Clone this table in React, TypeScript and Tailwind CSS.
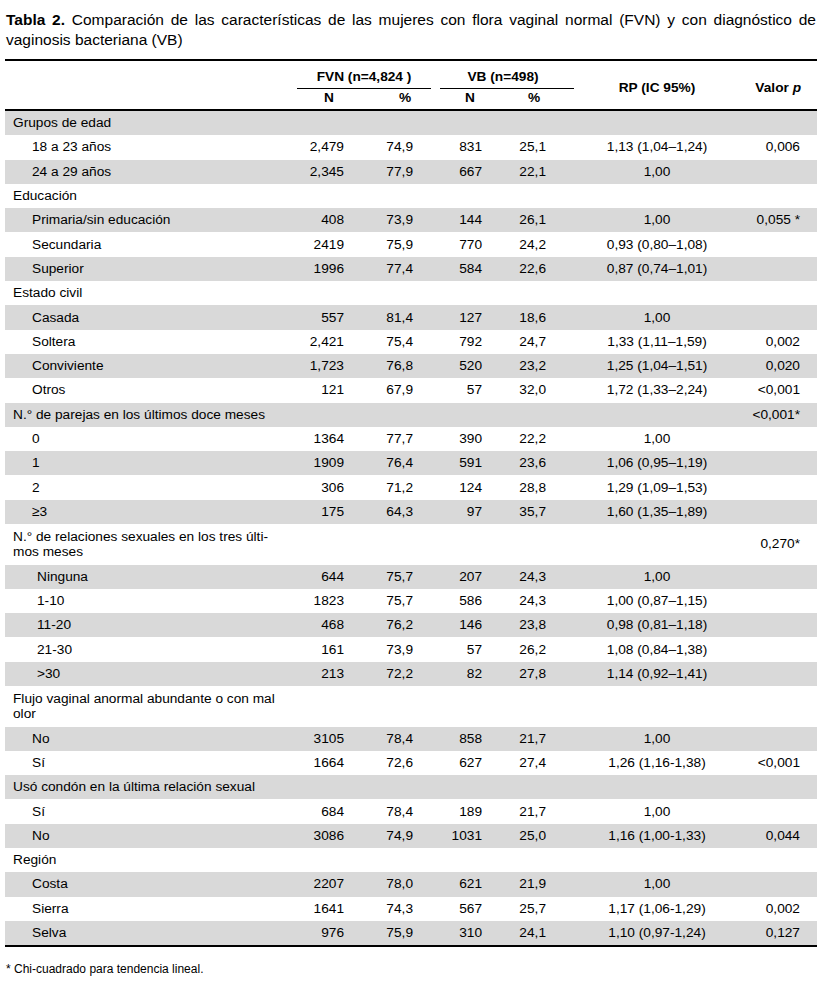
import React from "react";

type Row = {
  l: React.ReactNode;
  t: "cat" | "sub" | "sub2";
  g: boolean;
  v?: string[];
  p?: string;
  dbl?: boolean;
};

const rows: Row[] = [
  { l: "Grupos de edad", t: "cat", g: true },
  { l: "18 a 23 años", t: "sub", g: false, v: ["2,479", "74,9", "831", "25,1", "1,13 (1,04–1,24)", "0,006"] },
  { l: "24 a 29 años", t: "sub", g: true, v: ["2,345", "77,9", "667", "22,1", "1,00", ""] },
  { l: "Educación", t: "cat", g: false },
  { l: "Primaria/sin educación", t: "sub", g: true, v: ["408", "73,9", "144", "26,1", "1,00", "0,055 *"] },
  { l: "Secundaria", t: "sub", g: false, v: ["2419", "75,9", "770", "24,2", "0,93 (0,80–1,08)", ""] },
  { l: "Superior", t: "sub", g: true, v: ["1996", "77,4", "584", "22,6", "0,87 (0,74–1,01)", ""] },
  { l: "Estado civil", t: "cat", g: false },
  { l: "Casada", t: "sub", g: true, v: ["557", "81,4", "127", "18,6", "1,00", ""] },
  { l: "Soltera", t: "sub", g: false, v: ["2,421", "75,4", "792", "24,7", "1,33 (1,11–1,59)", "0,002"] },
  { l: "Conviviente", t: "sub", g: true, v: ["1,723", "76,8", "520", "23,2", "1,25 (1,04–1,51)", "0,020"] },
  { l: "Otros", t: "sub", g: false, v: ["121", "67,9", "57", "32,0", "1,72 (1,33–2,24)", "<0,001"] },
  { l: "N.° de parejas en los últimos doce meses", t: "cat", g: true, p: "<0,001*" },
  { l: "0", t: "sub", g: false, v: ["1364", "77,7", "390", "22,2", "1,00", ""] },
  { l: "1", t: "sub", g: true, v: ["1909", "76,4", "591", "23,6", "1,06 (0,95–1,19)", ""] },
  { l: "2", t: "sub", g: false, v: ["306", "71,2", "124", "28,8", "1,29 (1,09–1,53)", ""] },
  { l: "≥3", t: "sub", g: true, v: ["175", "64,3", "97", "35,7", "1,60 (1,35–1,89)", ""] },
  {
    l: (
      <>
        N.° de relaciones sexuales en los tres últi-
        <br />
        mos meses
      </>
    ),
    t: "cat",
    g: false,
    p: "0,270*",
    dbl: true,
  },
  { l: "Ninguna", t: "sub2", g: true, v: ["644", "75,7", "207", "24,3", "1,00", ""] },
  { l: "1-10", t: "sub2", g: false, v: ["1823", "75,7", "586", "24,3", "1,00 (0,87–1,15)", ""] },
  { l: "11-20", t: "sub2", g: true, v: ["468", "76,2", "146", "23,8", "0,98 (0,81–1,18)", ""] },
  { l: "21-30", t: "sub2", g: false, v: ["161", "73,9", "57", "26,2", "1,08 (0,84–1,38)", ""] },
  { l: ">30", t: "sub2", g: true, v: ["213", "72,2", "82", "27,8", "1,14 (0,92–1,41)", ""] },
  {
    l: (
      <>
        Flujo vaginal anormal abundante o con mal
        <br />
        olor
      </>
    ),
    t: "cat",
    g: false,
    dbl: true,
  },
  { l: "No", t: "sub", g: true, v: ["3105", "78,4", "858", "21,7", "1,00", ""] },
  { l: "Sí", t: "sub", g: false, v: ["1664", "72,6", "627", "27,4", "1,26 (1,16-1,38)", "<0,001"] },
  { l: "Usó condón en la última relación sexual", t: "cat", g: true },
  { l: "Sí", t: "sub", g: false, v: ["684", "78,4", "189", "21,7", "1,00", ""] },
  { l: "No", t: "sub", g: true, v: ["3086", "74,9", "1031", "25,0", "1,16 (1,00-1,33)", "0,044"] },
  { l: "Región", t: "cat", g: false },
  { l: "Costa", t: "sub", g: true, v: ["2207", "78,0", "621", "21,9", "1,00", ""] },
  { l: "Sierra", t: "sub", g: false, v: ["1641", "74,3", "567", "25,7", "1,17 (1,06-1,29)", "0,002"] },
  { l: "Selva", t: "sub", g: true, v: ["976", "75,9", "310", "24,1", "1,10 (0,97-1,24)", "0,127"] },
];

const gridCols = "grid grid-cols-[292px_67px_67px_9px_67px_67px_166px_77px]";

function BodyRow({ r }: { r: Row }) {
  const h = r.dbl ? "h-[40.5px]" : "h-[24.3px]";
  const bg = r.g ? "bg-[#d9d9d9]" : "bg-white";
  const pl = r.t === "cat" ? "pl-[8px]" : r.t === "sub" ? "pl-[27px]" : "pl-[32px]";
  const v = r.v;
  return (
    <div className={`${gridCols} ${h} ${bg} items-center`}>
      <div className={`${pl} ${r.dbl ? "leading-[15.5px]" : "leading-[16px]"} whitespace-nowrap`}>{r.l}</div>
      <div className="text-right pr-[20px]">{v ? v[0] : ""}</div>
      <div className="text-right pr-[18px]">{v ? v[1] : ""}</div>
      <div />
      <div className="text-right pr-[25px]">{v ? v[2] : ""}</div>
      <div className="text-right pr-[28px]">{v ? v[3] : ""}</div>
      <div className="text-center">{v ? v[4] : ""}</div>
      <div className="text-right pr-[17px] whitespace-nowrap">{v ? v[5] : r.p ?? ""}</div>
    </div>
  );
}

export default function App() {
  return (
    <div className="w-[825px] h-[982px] bg-white text-black font-['Liberation_Sans',Arial,sans-serif]">
      <div className="pt-[10px] pl-[6px] pr-[9px] text-[15.5px] leading-[20px] text-justify">
        <span className="font-bold">Tabla 2.</span> Comparación de las características de las mujeres con flora
        vaginal normal (FVN) y con diagnóstico de vaginosis bacteriana (VB)
      </div>

      <div className="ml-[5px] w-[812px] mt-[9px] text-[13.7px] leading-[16px]">
        <div className="border-t-2 border-b-2 border-black">
          <div className={`${gridCols} grid-rows-[28px_20px] font-bold`}>
            <div className="row-span-2" />
            <div className="col-span-2 border-b border-black flex items-end justify-center pb-[3px]">
              FVN (n=4,824 )
            </div>
            <div className="row-span-2" />
            <div className="col-span-2 border-b border-black flex items-end justify-center pb-[3px] pr-[8px]">
              VB (n=498)
            </div>
            <div className="row-span-2 flex items-center justify-center pt-[5px]">RP (IC 95%)</div>
            <div className="row-span-2 flex items-center justify-end pr-[16px] pt-[5px]">
              Valor&nbsp;<span className="italic">p</span>
            </div>
            <div className="pt-[1px] text-center pr-[3px]">N</div>
            <div className="pt-[1px] text-center pl-[15px]">%</div>
            <div className="pt-[1px] text-center pr-[7px]">N</div>
            <div className="pt-[1px] text-center pr-[13px]">%</div>
          </div>
        </div>
        <div className="border-b-2 border-black">
          {rows.map((r, i) => (
            <BodyRow key={i} r={r} />
          ))}
        </div>
      </div>

      <div className="mt-[15px] pl-[6px] text-[12px] leading-[14px]">* Chi-cuadrado para tendencia lineal.</div>
    </div>
  );
}
